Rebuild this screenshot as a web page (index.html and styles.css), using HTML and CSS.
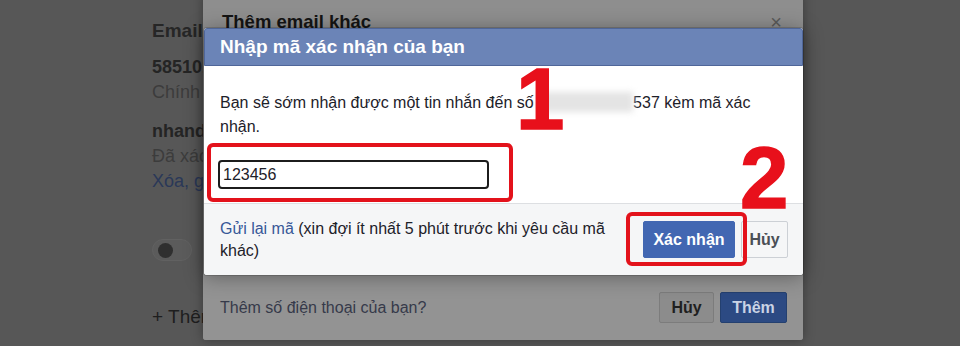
FILE: index.html
```html
<!DOCTYPE html>
<html lang="vi">
<head>
<meta charset="utf-8">
<title>Nhập mã xác nhận</title>
<link rel="stylesheet" href="styles.css">
</head>
<body>
<main class="settings">
  <h2 class="settings-title">Email và số điện thoại</h2>
  <div class="entry entry-1">
    <div class="entry-main">585101234567</div>
    <div class="entry-sub">Chính</div>
  </div>
  <div class="entry entry-2">
    <div class="entry-main">nhandang@gmail.com</div>
    <div class="entry-sub">Đã xác nhận</div>
    <div class="entry-link">Xóa, gửi lại</div>
  </div>
  <div class="toggle"><span class="toggle-knob"></span></div>
  <div class="add-link">+ Thêm email hoặc số điện thoại</div>
</main>

<section class="dialog-back">
  <header class="dialog-back-header">
    <h3 class="dialog-back-title">Thêm email khác</h3>
    <span class="dialog-back-close">×</span>
  </header>
  <footer class="dialog-back-footer">
    <span class="dialog-back-question">Thêm số điện thoại của bạn?</span>
    <div class="dialog-back-actions">
      <button class="btn-dim btn-dim-cancel">Hủy</button>
      <button class="btn-dim btn-dim-add">Thêm</button>
    </div>
  </footer>
</section>

<section class="dialog">
  <header class="dialog-header">
    <h3 class="dialog-title">Nhập mã xác nhận của bạn</h3>
  </header>
  <div class="dialog-body">
    <p class="dialog-text">Bạn sẽ sớm nhận được một tin nhắn đến số <span class="masked"></span>537 kèm mã xác nhận.</p>
    <input class="code-input" type="text" value="123456" readonly>
  </div>
  <footer class="dialog-footer">
    <p class="resend"><a href="#">Gửi lại mã</a> (xin đợi ít nhất 5 phút trước khi yêu cầu mã khác)</p>
    <div class="actions">
      <button class="btn btn-primary">Xác nhận</button>
      <button class="btn btn-cancel">Hủy</button>
    </div>
  </footer>

  <div class="mark-box mark-box-1"></div>
  <div class="mark-box mark-box-2"></div>
  <div class="mark-num mark-num-1">1</div>
  <div class="mark-num mark-num-2">2</div>
</section>
</body>
</html>
```

FILE: styles.css
```css
* { box-sizing: border-box; margin: 0; padding: 0; }

html, body {
  width: 960px;
  height: 346px;
  overflow: hidden;
}

body {
  position: relative;
  background: #575757;
  font-family: "Liberation Sans", Arial, sans-serif;
  color: #1d2129;
}

/* underlying page (only the strip left of the dialogs is visible) */
.settings {
  width: 203px;
  height: 346px;
  overflow: hidden;
  padding: 19px 0 0 152px;
  display: flex;
  flex-direction: column;
  align-items: flex-start;
  white-space: nowrap;
}
.settings-title {
  font-size: 19px;
  line-height: 24px;
  font-weight: bold;
  color: #262626;
}
.entry { font-size: 18px; line-height: 25px; }
.entry-1 { margin-top: 12px; }
.entry-2 { margin-top: 14px; }
.entry-main { font-weight: bold; color: #242424; }
.entry-sub { color: #3c3c3c; }
.entry-link { color: #2a3858; }
.toggle {
  margin-top: 45px;
  width: 40px;
  height: 22px;
  border-radius: 11px;
  background: #5b5b5b;
  border: 1px solid #616161;
  display: flex;
  align-items: center;
  padding-left: 5px;
}
.toggle-knob {
  width: 15px;
  height: 15px;
  border-radius: 50%;
  background: #2f2f2f;
}
.add-link {
  margin-top: 43px;
  font-size: 19px;
  line-height: 25px;
  color: #1e1e1e;
}

/* dimmed dialog behind */
.dialog-back {
  position: absolute;
  left: 203px;
  top: -6px;
  width: 600px;
  height: 346px;
  background: #8e8e8e;
  border-radius: 3px;
  display: flex;
  flex-direction: column;
  justify-content: space-between;
  box-shadow: 0 0 12px rgba(0, 0, 0, .35);
}
.dialog-back-header {
  display: flex;
  justify-content: space-between;
  align-items: flex-start;
  padding: 16px 21px 0 19px;
}
.dialog-back-title {
  font-size: 18.5px;
  line-height: 24px;
  font-weight: bold;
  color: #141414;
}
.dialog-back-close {
  font-size: 20px;
  line-height: 24px;
  color: #5a5a5a;
}
.dialog-back-footer {
  height: 65px;
  background: #939393;
  display: flex;
  align-items: center;
  justify-content: space-between;
  padding: 0 16px 0 17px;
  border-radius: 0 0 3px 3px;
}
.dialog-back-question { font-size: 16px; color: #363a4a; }
.dialog-back-actions { display: flex; gap: 6px; }
.btn-dim {
  height: 31px;
  border-radius: 2px;
  font: bold 16px "Liberation Sans", Arial, sans-serif;
  display: flex;
  align-items: center;
  justify-content: center;
}
.btn-dim-cancel {
  width: 55px;
  background: #8c8c8c;
  border: 1px solid #7c7c7c;
  color: #1f1f1f;
}
.btn-dim-add {
  width: 67px;
  background: #2c4a83;
  border: 1px solid #24406f;
  color: #c9d3e5;
}

/* front dialog */
.dialog {
  position: absolute;
  left: 204px;
  top: 28px;
  width: 599px;
  background: #fff;
  border-radius: 3px;
  box-shadow: 0 2px 20px rgba(0, 0, 0, .35), 0 0 0 1px rgba(0, 0, 0, .15);
}
.dialog-header {
  height: 38px;
  background: #6b84b7;
  border: 1px solid #4f6699;
  padding: 0 15px;
  display: flex;
  align-items: center;
  border-radius: 3px 3px 0 0;
}
.dialog-title {
  color: #fff;
  font-size: 19px;
  font-weight: bold;
}
.dialog-body { padding: 25px 16px 14px; }
.dialog-text {
  font-size: 16px;
  line-height: 24px;
  color: #1d2129;
}
.masked {
  display: inline-block;
  width: 95px;
  height: 20px;
  vertical-align: -4px;
  background: #e4e4e4;
  filter: blur(3px);
}
.code-input {
  display: block;
  margin: 21px 0 0 -2px;
  width: 271px;
  height: 29px;
  border: 2px solid #1c1c1c;
  border-radius: 4px;
  padding: 0 3px;
  font: 16px "Liberation Sans", Arial, sans-serif;
  color: #1d2129;
  outline: none;
}
.dialog-footer {
  height: 72px;
  background: #f5f6f7;
  border-top: 1px solid #dddfe2;
  display: flex;
  align-items: center;
  padding: 0 15px 0 16px;
  gap: 16px;
  border-radius: 0 0 3px 3px;
}
.resend {
  flex: 1;
  font-size: 16px;
  line-height: 22px;
  color: #1d2129;
}
.resend a { color: #385898; text-decoration: none; }
.actions { display: flex; gap: 6px; }
.btn {
  height: 37px;
  border-radius: 2px;
  font: bold 16px "Liberation Sans", Arial, sans-serif;
  display: flex;
  align-items: center;
  justify-content: center;
}
.btn-primary {
  width: 92px;
  background: #4267b2;
  border: 1px solid #4267b2;
  color: #fff;
}
.btn-cancel {
  width: 47px;
  background: #f5f6f7;
  border: 1px solid #ccd0d5;
  color: #4b4f56;
}

/* red annotations */
.mark-box {
  position: absolute;
  border: 4px solid #e3121b;
  border-radius: 6px;
}
.mark-box-1 { left: 3px; top: 115px; width: 306px; height: 59px; }
.mark-box-2 { left: 422px; top: 184px; width: 121px; height: 54px; }
.mark-num {
  position: absolute;
  font-size: 87px;
  line-height: 1;
  font-weight: bold;
  color: #e8101b;
  -webkit-text-stroke: 1.5px #e8101b;
}
.mark-num-1 { left: 312px; top: 27px; }
.mark-num-2 { left: 536px; top: 106px; }
```
